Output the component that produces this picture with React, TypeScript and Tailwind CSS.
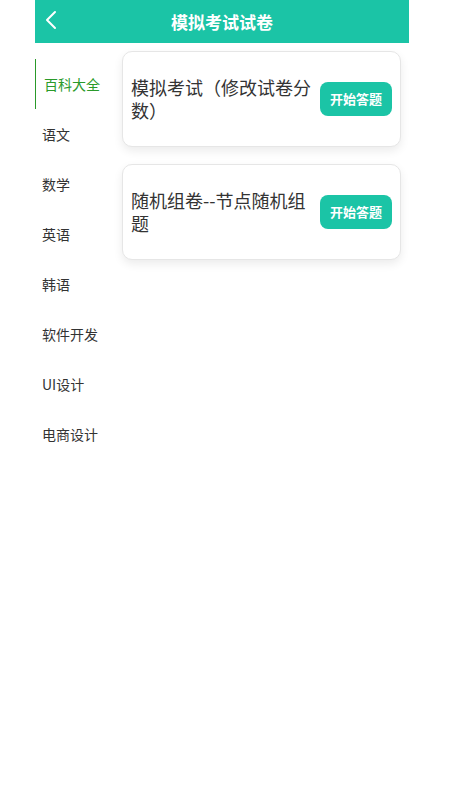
import { ChevronLeft } from 'lucide-react';

const subjects = ['百科大全', '语文', '数学', '英语', '韩语', '软件开发', 'UI设计', '电商设计'];

const papers = [
  { id: 1, title: '模拟考试（修改试卷分数）' },
  { id: 2, title: '随机组卷--节点随机组题' },
];

export default function App() {
  const active = 0;

  return (
    <div
      className="min-h-screen bg-white"
      style={{ fontFamily: '"Noto Sans CJK SC", "Noto Sans", sans-serif' }}
    >
      <div className="ml-[35px] w-[374px]">
        <header className="relative flex h-[43px] items-center justify-center bg-[#1bc4a6]">
          <button className="absolute left-[0px] top-[4px] text-white">
            <ChevronLeft size={32} strokeWidth={1.5} />
          </button>
          <h1 className="text-[17px] font-bold text-white">模拟考试试卷</h1>
        </header>

        <div className="flex">
          <nav className="w-[87px] shrink-0 pt-[16px]">
            {subjects.map((s, i) => (
              <div
                key={s}
                className={
                  i === active
                    ? 'flex h-[50px] items-center border-l border-[#2a9a2a] pl-[8px] text-[14px] text-[#2a9a2a]'
                    : 'flex h-[50px] items-center pl-[7px] text-[14px] text-[#333]'
                }
              >
                {s}
              </div>
            ))}
          </nav>

          <div className="flex flex-1 flex-col gap-[17px] pr-[8px] pt-[8px]">
            {papers.map((p) => (
              <div
                key={p.id}
                className="flex items-center rounded-[10px] border border-[#e6e6e6] bg-white px-[8px] py-[24px] shadow-[0_4px_10px_rgba(0,0,0,0.08)]"
              >
                <p className="min-w-0 flex-1 text-[18px] leading-[23px] text-[#333]">{p.title}</p>
                <button className="ml-[6px] h-[34px] w-[72px] shrink-0 rounded-[8px] bg-[#1bc4a6] text-[13px] font-bold text-white">
                  开始答题
                </button>
              </div>
            ))}
          </div>
        </div>
      </div>
    </div>
  );
}
